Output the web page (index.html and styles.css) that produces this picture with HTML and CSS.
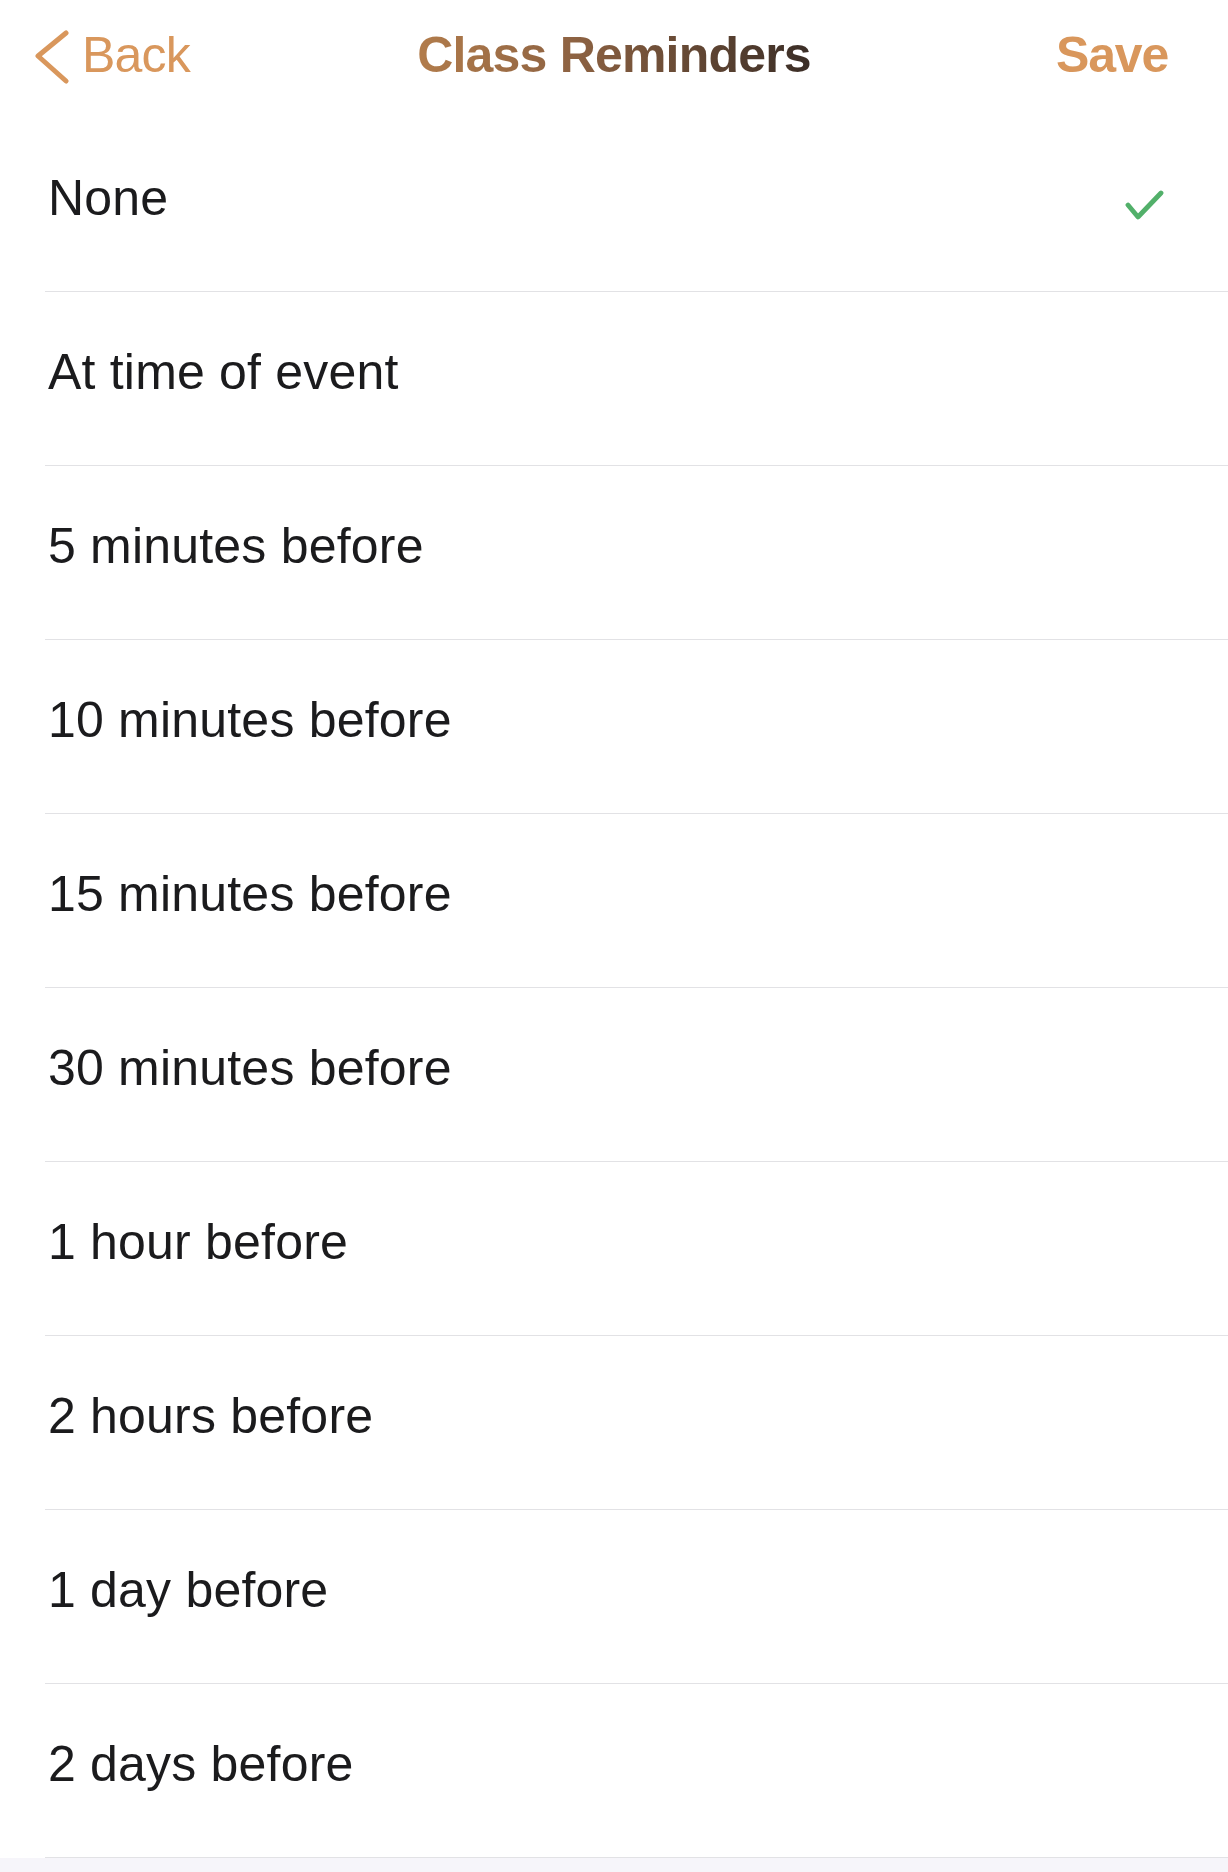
FILE: index.html
```html
<!DOCTYPE html>
<html lang="en">
<head>
<meta charset="utf-8">
<title>Class Reminders</title>
<link rel="stylesheet" href="styles.css">
</head>
<body>
<div class="screen">
  <header class="nav">
    <a class="nav-back" href="#">
      <svg class="chevron" width="36" height="56" viewBox="0 0 36 56" aria-hidden="true">
        <polyline points="32,3 4,26 32,51" fill="none" stroke="#d9975c" stroke-width="5" stroke-linecap="round" stroke-linejoin="round"/>
      </svg>
      <span class="nav-back-label">Back</span>
    </a>
    <h1 class="nav-title">Class Reminders</h1>
    <a class="nav-save" href="#">Save</a>
  </header>
  <ul class="options">
    <li class="option is-selected">
      <span class="option-label">None</span>
      <svg class="check" width="40" height="32" viewBox="0 0 40 32" aria-hidden="true">
        <polyline points="3,15 13,27 36,3" fill="none" stroke="#52b06a" stroke-width="4.8" stroke-linecap="round" stroke-linejoin="round"/>
      </svg>
    </li>
    <li class="option"><span class="option-label">At time of event</span></li>
    <li class="option"><span class="option-label">5 minutes before</span></li>
    <li class="option"><span class="option-label">10 minutes before</span></li>
    <li class="option"><span class="option-label">15 minutes before</span></li>
    <li class="option"><span class="option-label">30 minutes before</span></li>
    <li class="option"><span class="option-label">1 hour before</span></li>
    <li class="option"><span class="option-label">2 hours before</span></li>
    <li class="option"><span class="option-label">1 day before</span></li>
    <li class="option"><span class="option-label">2 days before</span></li>
  </ul>
</div>
</body>
</html>
```

FILE: styles.css
```css
* {
  box-sizing: border-box;
}

html, body {
  margin: 0;
  padding: 0;
}

body {
  background: #f6f5fa;
  font-family: "Liberation Sans", Arial, sans-serif;
  color: #1b1b1d;
}

.screen {
  width: 1228px;
  min-height: 1872px;
  background: #f6f5fa;
}

.nav {
  display: grid;
  grid-template-columns: 1fr auto 1fr;
  align-items: center;
  height: 118px;
  padding: 0 47px 8px 47px;
  background: #ffffff;
}

.nav-back {
  display: flex;
  align-items: center;
  gap: 12px;
  margin-left: -13px;
  color: #d9975c;
  text-decoration: none;
  font-size: 50px;
  letter-spacing: -0.8px;
  justify-self: start;
}

.chevron {
  display: block;
  margin-top: 6px;
}

.nav-title {
  margin: 0;
  font-size: 50px;
  font-weight: 700;
  letter-spacing: -0.8px;
  background: linear-gradient(90deg, #b27c4b 0%, #8d6242 40%, #3a2d26 100%);
  -webkit-background-clip: text;
  background-clip: text;
  color: transparent;
}

.nav-save {
  justify-self: end;
  margin-right: 13px;
  color: #d9975c;
  text-decoration: none;
  font-size: 50px;
  font-weight: 700;
  letter-spacing: -1.2px;
}

.options {
  list-style: none;
  margin: 0;
  padding: 0 0 0 45px;
  background: #ffffff;
}

.option {
  display: flex;
  justify-content: space-between;
  align-items: flex-start;
  height: 174px;
  border-bottom: 1.5px solid #e2e2e5;
  padding-right: 63px;
}

.option-label {
  padding-top: 50px;
  padding-left: 3px;
  font-size: 50px;
  line-height: 60px;
  letter-spacing: 0.2px;
}

.check {
  display: block;
  align-self: center;
  margin-top: 2px;
}
```
